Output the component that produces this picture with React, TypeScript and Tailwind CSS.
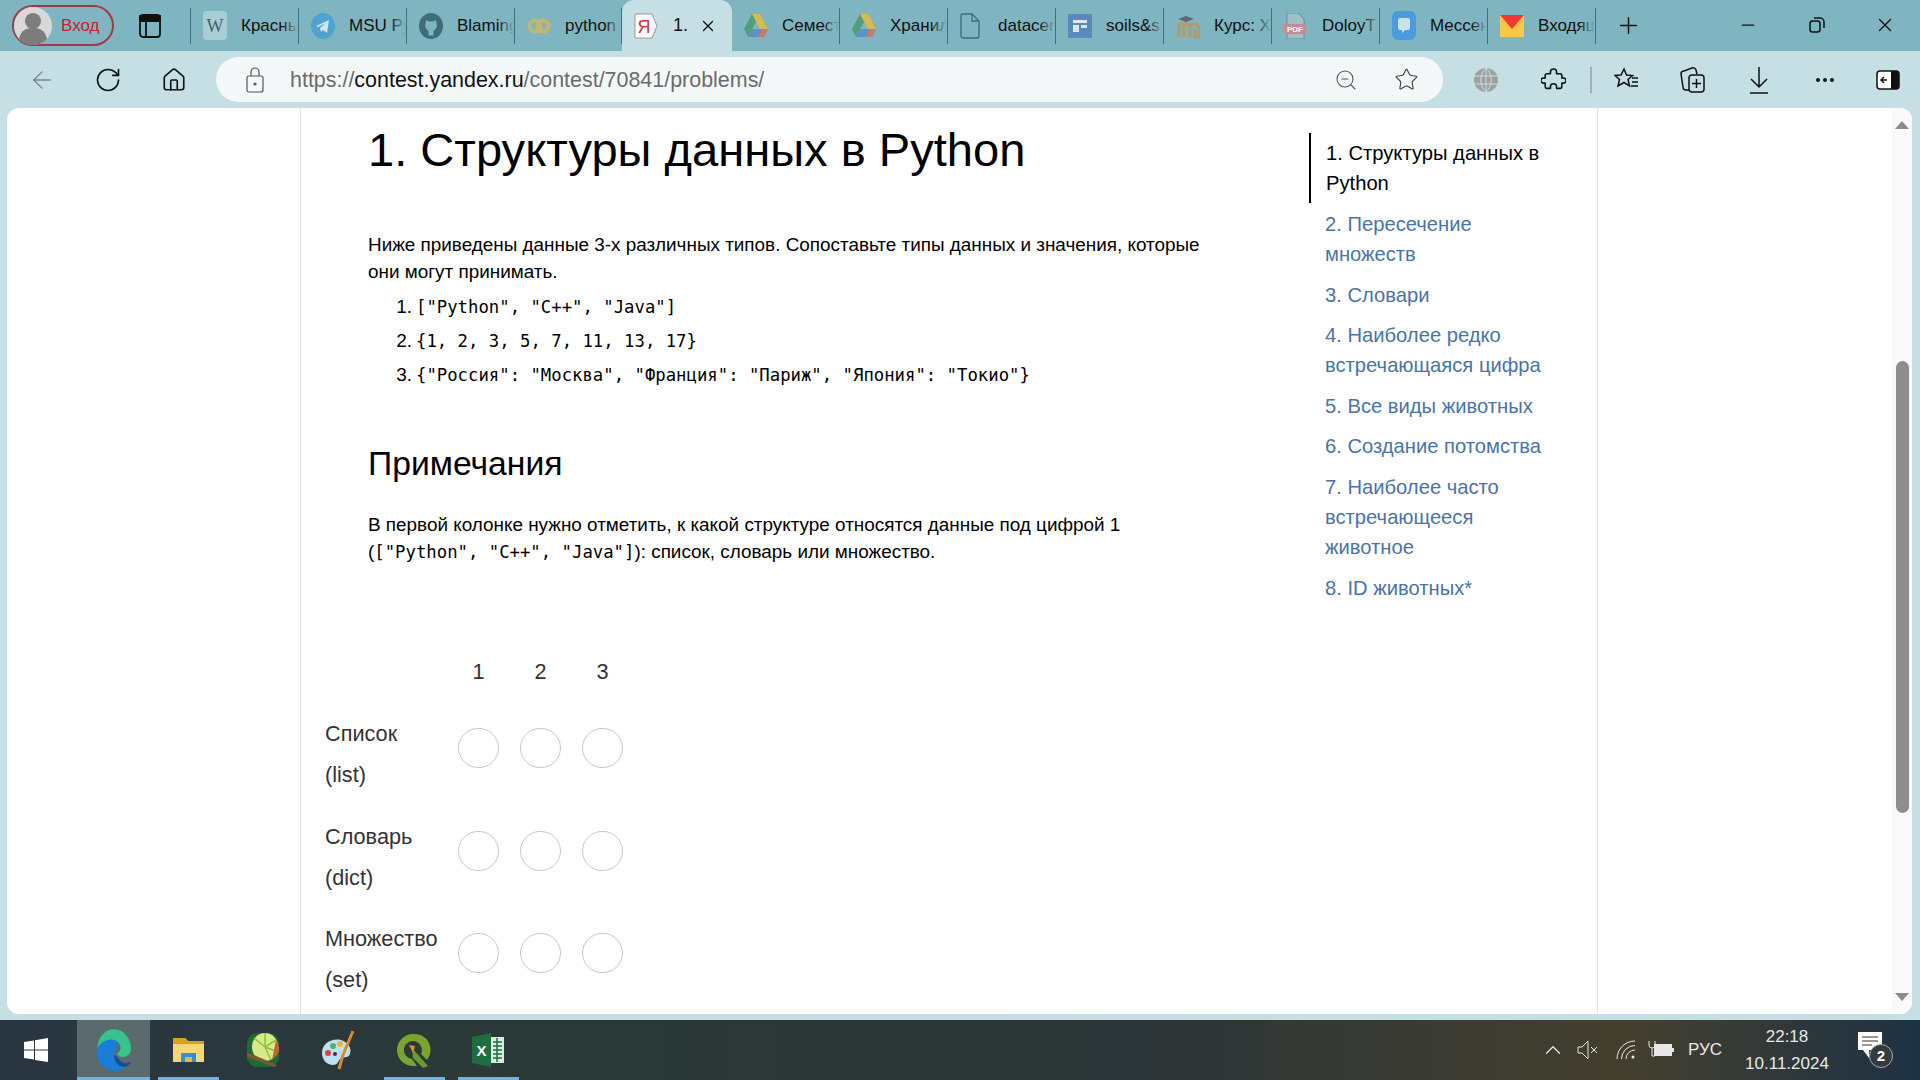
import React from "react";
import { ArrowLeft, RotateCw, Home, ZoomOut, Star, MoreHorizontal, Plus, Minus, X, ChevronUp } from "lucide-react";

const sans = "font-['Liberation_Sans',Arial,sans-serif]";

function Fav({ k }: { k: string }) {
  if (k === "w") return <svg width="24" height="29" viewBox="0 0 24 29"><rect width="24" height="29" rx="4" fill="#a9cdd4" /><text x="12" y="21" textAnchor="middle" fontFamily="Liberation Serif" fontSize="18" fill="#4b6066">W</text></svg>;
  if (k === "tg") return <svg width="24" height="26" viewBox="0 0 24 26"><ellipse cx="12" cy="13" rx="12" ry="13" fill="#4fa3cf" /><path d="M5 13l13-6-2 13-4-3-2 2-1-4 6-5-8 4z" fill="#cfe6ee" /></svg>;
  if (k === "gh") return <svg width="24" height="26" viewBox="0 0 24 26"><ellipse cx="12" cy="13" rx="12" ry="13" fill="#3f6c78" /><path d="M7 7l3 1.500h4L17 7l.5 4c1 3-1 6-3 6.500v5h-5v-5c-2-.5-4-3.500-3-6.500z" fill="#7fb5c0" /></svg>;
  if (k === "py") return <svg width="24" height="20" viewBox="0 0 24 20"><circle cx="8" cy="10" r="5.500" fill="none" stroke="#b8b87a" strokeWidth="4" /><circle cx="16" cy="10" r="5.500" fill="none" stroke="#c9b56a" strokeWidth="4" /></svg>;
  if (k === "drive") return <svg width="24" height="26" viewBox="0 0 24 26"><path d="M8 1h8l8 15h-8z" fill="#d9b84f" /><path d="M8 1L0 16l4 8 8-15z" fill="#4f9f78" /><path d="M4 24h16l4-8H8z" fill="#5b93c9" /><path d="M14 24h6l4-8h-6z" fill="#c97a68" /></svg>;
  if (k === "file") return <svg width="20" height="26" viewBox="0 0 20 26" fill="none" stroke="#3f6c78" strokeWidth="1.300"><path d="M1 3a2 2 0 0 1 2-2h9l7 7v15a2 2 0 0 1-2 2H3a2 2 0 0 1-2-2z" /><path d="M12 1v7h7" /></svg>;
  if (k === "soils") return <svg width="24" height="24" viewBox="0 0 24 24"><rect width="24" height="24" fill="#5c88bb" /><rect x="5" y="6" width="14" height="3" fill="#dbe6ef" /><rect x="5" y="11" width="6" height="7" fill="#dbe6ef" /><rect x="13" y="11" width="6" height="3" fill="#dbe6ef" /></svg>;
  if (k === "m") return <svg width="24" height="26" viewBox="0 0 24 26"><path d="M3 24V13c0-3 4-3 5 0 1-3 5-3 6 0v11M8 13v11M14 13c1-3 9-3 9 2v9h-4V16" fill="none" stroke="#b79a6a" strokeWidth="3" /><path d="M2 6l8-3 8 3-8 3z" fill="#667" /></svg>;
  if (k === "pdf") return <svg width="22" height="26" viewBox="0 0 22 26"><path d="M3 0h11l6 6v20H3z" fill="#9fc0c6" stroke="#6c8d94" /><rect y="11" width="22" height="10" rx="2" fill="#c98a92" /><text x="11" y="19" textAnchor="middle" fontFamily="Liberation Sans" fontWeight="700" fontSize="8" fill="#fff">PDF</text></svg>;
  if (k === "msg") return <svg width="24" height="29" viewBox="0 0 24 29"><rect width="24" height="29" rx="6" fill="#4b9be0" /><path d="M6 9a2 2 0 0 1 2-2h8a2 2 0 0 1 2 2v8a2 2 0 0 1-2 2h-3l-3 3v-3H8a2 2 0 0 1-2-2z" fill="#c9e2ee" /></svg>;
  if (k === "mail") return <svg width="24" height="26" viewBox="0 0 24 26"><rect y="2" width="24" height="22" fill="#f8c948" /><path d="M0 2h24L12 16z" fill="#f4372e" /></svg>;
  return null;
}

const leftTabs = [
  { k: "w", t: "Красны" },
  { k: "tg", t: "MSU Py" },
  { k: "gh", t: "Blaming" },
];
const rightTabs = [
  { k: "drive", t: "Семест" },
  { k: "drive", t: "Хранил" },
  { k: "file", t: "datacer" },
  { k: "soils", t: "soils&s" },
  { k: "m", t: "Курс: X" },
  { k: "pdf", t: "DoloyT" },
  { k: "msg", t: "Мессен" },
  { k: "mail", t: "Входящ" },
];

function Tab({ k, t, w = "w-[108px]" }: { k: string; t: string; w?: string }) {
  return (
    <div className={`${w} h-[36px] shrink-0 flex items-center border-r border-[#3f6f7a] relative`}>
      <div className="w-[50px] pl-[12px] shrink-0 flex items-center"><Fav k={k} /></div>
      <div className="w-[57px] overflow-hidden whitespace-nowrap text-[17px] text-[#111] relative">
        {t}
        <div className="absolute right-0 top-0 bottom-0 w-[16px] bg-gradient-to-r from-transparent to-[#7fb5c0]" />
      </div>
    </div>
  );
}

function TabBar() {
  return (
    <div className={`h-[51px] shrink-0 bg-[#7fb5c0] flex items-center ${sans}`}>
      <div className="ml-[12px] w-[102px] h-[41px] shrink-0 rounded-full border-2 border-[#a23a45] flex items-center">
        <svg width="38" height="38" viewBox="0 0 38 38" className="shrink-0">
          <circle cx="19" cy="19" r="19" fill="#d8d8d8" />
          <circle cx="19" cy="14" r="8" fill="#7d7d7d" />
          <path d="M5 32c2-9 7-11 14-11s12 2 14 11a19 19 0 0 1-28 0z" fill="#7d7d7d" />
        </svg>
        <span className="ml-[9px] text-[17px] text-[#c8202c]">Вход</span>
      </div>
      <div className="w-[76px] flex justify-center shrink-0 pr-[5px]">
        <svg width="22" height="24" viewBox="0 0 22 24" fill="none" stroke="#111" strokeWidth="1.800">
          <rect x="1" y="1" width="20" height="22" rx="3" />
          <path d="M1 2h20v5H1z" fill="#111" />
          <path d="M7 7v16" />
        </svg>
      </div>
      <div className="h-[36px] border-l border-[#3f6f7a] shrink-0" />
      {leftTabs.map((x) => <Tab key={x.t} k={x.k} t={x.t} />)}
      <Tab k="py" t="python" w="w-[107px]" />
      <div className="w-[110px] h-[51px] shrink-0 bg-[#c6dfe4] rounded-t-[12px] flex items-center">
        <div className="w-[51px] pl-[12px] shrink-0">
          <svg width="24" height="28" viewBox="0 0 24 28"><path d="M1 2h17l5 12-5 12H1z" fill="#fff" stroke="#999" /><text x="10" y="21" textAnchor="middle" fontFamily="Liberation Sans" fontSize="18" fill="#d33">Я</text></svg>
        </div>
        <span className="text-[18px] text-[#111]">1.</span>
        <X size={18} strokeWidth={1.800} className="ml-[11px] text-[#111]" />
      </div>
      {rightTabs.map((x) => <Tab key={x.t} k={x.k} t={x.t} />)}
      <Plus size={27} strokeWidth={1.300} className="ml-[19px] text-[#111] shrink-0" />
      <div className="flex-1" />
      <div className="flex items-center shrink-0 gap-[49px] pr-[24px] pb-[2px]">
        <Minus size={20} strokeWidth={1.500} className="text-[#111] mr-[2px]" />
        <svg width="16" height="18" viewBox="0 0 16 18" fill="none" stroke="#111" strokeWidth="1.500"><rect x="1" y="5" width="10" height="11" rx="2.500" /><path d="M5 2h6a4 4 0 0 1 4 4v6" /></svg>
        <X size={22} strokeWidth={1.500} className="text-[#111]" />
      </div>
    </div>
  );
}

function Toolbar() {
  return (
    <div className={`h-[57px] shrink-0 bg-[#c6dfe4] flex items-start pt-[6px] ${sans}`}>
      <div className="w-[216px] h-[45px] shrink-0 flex items-center text-[#111]">
        <ArrowLeft size={28} strokeWidth={1.100} className="ml-[28px] text-[#75878c]" />
        <RotateCw size={28} strokeWidth={1.400} className="ml-[38px]" />
        <Home size={26} strokeWidth={1.500} className="ml-[39px]" />
      </div>
      <div className="w-[1227px] h-[45px] shrink-0 bg-[#f5f8f9] rounded-full flex items-center">
        <svg width="18" height="26" viewBox="0 0 18 26" fill="none" stroke="#555" strokeWidth="1.200" className="ml-[30px]"><rect x="1" y="9" width="16" height="16" rx="2" /><path d="M5 9V5a4 4 0 0 1 8 0v4" /><circle cx="9" cy="17" r="1" fill="#555" /></svg>
        <span className="ml-[26px] pt-[2px] text-[21.450px] text-[#6b6b6b] whitespace-nowrap">https://<span className="text-[#111]">contest.yandex.ru</span>/contest/70841/problems/</span>
        <div className="flex-1" />
        <ZoomOut size={24} strokeWidth={1.100} className="text-[#555] mr-[36px]" />
        <Star size={25} strokeWidth={1.100} className="text-[#444] mr-[24px]" />
      </div>
      <div className="flex-1 h-[45px] flex items-center text-[#111]">
        <svg width="24" height="24" viewBox="0 0 24 24" fill="none" className="ml-[31px]"><circle cx="12" cy="12" r="12" fill="#a0a0a0" /><path d="M0 8h24M0 16h24M12 0v24M12 0c-7 6-7 18 0 24M12 0c7 6 7 18 0 24" stroke="#c6dfe4" strokeWidth="1" /></svg>
        <svg width="25" height="25" viewBox="0 0 24 24" fill="none" stroke="#111" strokeWidth="1.500" strokeLinejoin="round" className="ml-[43px]"><path d="M9 5a3 3 0 0 1 6 0c0 1-.5 1 0 1.500h3.500a1.500 1.500 0 0 1 1.500 1.500v2.500c.5.5 1 0 1.500 0a2.500 2.500 0 0 1 0 5c-.5 0-1-.5-1.500 0V19a1.500 1.500 0 0 1-1.500 1.500H15c-.5-.5 0-1 0-1.500a3 3 0 0 0-6 0c0 .5.5 1 0 1.500H5.500A1.500 1.500 0 0 1 4 19v-3.500c-.5-.5-1 0-1.500 0a2.500 2.500 0 0 1 0-5c.5 0 1 .5 1.500 0V8a1.500 1.500 0 0 1 1.500-1.500H9c.5-.5 0-.5 0-1.500z" /></svg>
        <div className="ml-[24px] h-[26px] border-l-2 border-[#9db3b8]" />
        <svg width="26" height="26" viewBox="0 0 26 26" fill="none" stroke="#111" strokeWidth="1.500" className="ml-[22px]"><path d="M10 2l2.500 6 6 .5-4.500 4 1.500 6.500-5.500-3.500L4 19l1.500-6.500L1 8.500l6-.5z" /><path d="M18 11h6M18 15h6M17 19h7" /></svg>
        <svg width="26" height="28" viewBox="0 0 26 28" fill="none" stroke="#111" strokeWidth="1.500" className="ml-[40px]"><path d="M9 24H6a3 3 0 0 1-3-3l-2-13a3 3 0 0 1 3-3l8-3a3 3 0 0 1 4 2l1 4" /><rect x="9" y="9" width="15" height="17" rx="3" /><path d="M16.500 13v9M12 17.500h9" /></svg>
        <svg width="24" height="28" viewBox="0 0 24 28" fill="none" stroke="#111" strokeWidth="1.500" className="ml-[41px]"><path d="M12 1v20M4 13l8 8 8-8M3 27h18" /></svg>
        <MoreHorizontal size={24} strokeWidth={2} className="ml-[42px]" />
        <svg width="24" height="20" viewBox="0 0 24 20" className="ml-[39px]"><rect x="1" y="1" width="22" height="18" rx="3" fill="#fff" stroke="#111" strokeWidth="1.500" /><path d="M15 1h5a3 3 0 0 1 3 3v12a3 3 0 0 1-3 3h-5z" fill="#111" /><path d="M11 10H5M8 7l-3 3 3 3" fill="none" stroke="#111" strokeWidth="1.500" /></svg>
      </div>
    </div>
  );
}

const navItems = [
  ["2. Пересечение", "множеств"],
  ["3. Словари"],
  ["4. Наиболее редко", "встречающаяся цифра"],
  ["5. Все виды животных"],
  ["6. Создание потомства"],
  ["7. Наиболее часто", "встречающееся", "животное"],
  ["8. ID животных*"],
];

function Nav() {
  return (
    <div className="w-[288px] shrink-0 pt-[25px] text-[20.200px] leading-[30px] text-[#4a72ad]">
      <div className="border-l-2 border-black pl-[15px] pt-[5px] text-black h-[70px]">
        <div>1. Структуры данных в</div>
        <div>Python</div>
      </div>
      <div className="pl-[16px] -mt-[4.500px]">
        {navItems.map((lines) => (
          <div key={lines[0]} className="pt-[10.600px]">
            {lines.map((l) => <div key={l}>{l}</div>)}
          </div>
        ))}
      </div>
    </div>
  );
}

function Circles() {
  return (
    <>
      <div className="w-[41px] h-[40px] rounded-full border border-[#c8c8c8]" />
      <div className="w-[41px] h-[40px] rounded-full border border-[#c8c8c8]" />
      <div className="w-[41px] h-[40px] rounded-full border border-[#c8c8c8]" />
    </>
  );
}

function Row({ a, b }: { a: string; b: string }) {
  return (
    <div className="flex h-[102.500px] items-start">
      <div className="w-[133px] text-[21.700px] leading-[41px] text-[#333] shrink-0">
        <div>{a}</div>
        <div>{b}</div>
      </div>
      <div className="flex gap-[21px] pt-[15px]">
        <Circles />
      </div>
    </div>
  );
}

function Form() {
  return (
    <div className="-ml-[43px] mt-[93px]">
      <div className="ml-[133px] flex gap-[21px] text-[21.700px] text-[#333] h-[54px] leading-[25px]">
        <div className="w-[41px] text-center">1</div>
        <div className="w-[41px] text-center">2</div>
        <div className="w-[41px] text-center">3</div>
      </div>
      <Row a="Список" b="(list)" />
      <Row a="Словарь" b="(dict)" />
      <Row a="Множество" b="(set)" />
    </div>
  );
}

function Content() {
  const mono = "font-['DejaVu_Sans_Mono',monospace] text-[17.300px]";
  return (
    <div className="flex-1 min-w-0 pl-[67px] text-black">
      <h1 className="text-[47.100px] leading-[56px] mt-[14px] font-normal text-black">1. Структуры данных в Python</h1>
      <p className="mt-[53px] text-[18.900px] leading-[27px] w-[850px]">Ниже приведены данные 3-х различных типов. Сопоставьте типы данных и значения, которые они могут принимать.</p>
      <div className="mt-[5px] text-[19px] leading-[34px]">
        <div className="flex"><span className="w-[44px] text-right">1.</span><span className={`ml-[4px] ${mono}`}>["Python", "C++", "Java"]</span></div>
        <div className="flex"><span className="w-[44px] text-right">2.</span><span className={`ml-[4px] ${mono}`}>{"{1, 2, 3, 5, 7, 11, 13, 17}"}</span></div>
        <div className="flex"><span className="w-[44px] text-right">3.</span><span className={`ml-[4px] ${mono}`}>{'{"Россия": "Москва", "Франция": "Париж", "Япония": "Токио"}'}</span></div>
      </div>
      <h2 className="mt-[49px] text-[33.700px] leading-[44px] font-normal">Примечания</h2>
      <p className="mt-[26px] text-[18.900px] leading-[27px] w-[850px]">
        В первой колонке нужно отметить, к какой структуре относятся данные под цифрой 1<br />
        (<span className={mono}>["Python", "C++", "Java"]</span>): список, словарь или множество.
      </p>
      <Form />
    </div>
  );
}

function Scrollbar() {
  return (
    <div className="w-[20px] h-full shrink-0 bg-[#fafafa] flex flex-col items-center pt-[13px] pb-[13px]">
      <div className="w-0 h-0 border-l-[7px] border-r-[7px] border-b-[8px] border-l-transparent border-r-transparent border-b-[#8a8a8a]" />
      <div className="w-[13px] h-[452px] mt-[232px] rounded-full bg-[#8e8e8e]" />
      <div className="flex-1" />
      <div className="w-0 h-0 border-l-[7px] border-r-[7px] border-t-[8px] border-l-transparent border-r-transparent border-t-[#8a8a8a]" />
    </div>
  );
}

function Main() {
  return (
    <div className="flex-1 min-h-0 bg-[#c6dfe4] pl-[7px] pr-[8px] pb-[6px]">
      <div className={`h-full bg-white rounded-[12px] overflow-hidden flex ${sans}`}>
        <div className="w-[293px] shrink-0" />
        <div className="w-[1298px] shrink-0 border-l border-r border-[#e3e3e3] flex">
          <Content />
          <Nav />
        </div>
        <div className="flex-1" />
        <Scrollbar />
      </div>
    </div>
  );
}

function TBIcon({ k }: { k: string }) {
  if (k === "edge") return (
    <svg width="38" height="44" viewBox="0 0 38 38" preserveAspectRatio="none">
      <path d="M3 18C4 7 12 1 20 1c10 0 17 8 17 17 0 4-3 7-8 7-3 0-5-1-6-3 3-1 4-4 3-7-2-4-7-6-12-4-5 2-9 5-11 7z" fill="#35c48d" />
      <path d="M3 18c3-5 8-8 14-8 5 0 8 3 7 7-2 1-4 3-4 6 0 7 6 12 13 10-4 3-8 4-13 4C10 37 1 29 3 18z" fill="#1b7ed6" />
      <path d="M20 23c0 7 6 12 13 10 2-1 3-2 4-4-3 2-7 2-10 0-2-2-4-4-7-6z" fill="#114f9c" />
    </svg>
  );
  if (k === "folder") return (
    <svg width="33" height="28" viewBox="0 0 33 28">
      <path d="M1 2h12l3 3h16v21H1z" fill="#f7d774" />
      <path d="M1 2h12l3 3H1z" fill="#d8a21f" />
      <rect x="1" y="5" width="31" height="3" fill="#d8a21f" />
      <path d="M9 26v-9h15v9h-4v-5h-7v5z" fill="#2f8fd8" />
      <rect x="13" y="21" width="7" height="5" fill="#e9b84a" />
    </svg>
  );
  if (k === "lime") return (
    <svg width="34" height="36" viewBox="0 0 34 36">
      <rect x="1" y="1" width="32" height="34" rx="10" fill="#1d6a35" />
      <ellipse cx="19" cy="15" rx="13" ry="14" fill="#d9e88a" />
      <path d="M19 15L8 6M19 15V1M19 15l11-7M19 15l13 5M19 15l6 13" stroke="#8fbf3f" strokeWidth="1.500" />
      <path d="M30 8a14 14 0 0 1 2 14l-6 6z" fill="#c9603a" />
      <path d="M1 20l30 13-3 2L1 25z" fill="#7a5a32" />
    </svg>
  );
  if (k === "paint") return (
    <svg width="36" height="42" viewBox="0 0 36 42">
      <path d="M2 24C2 14 12 9 21 11c7 2 11 8 9 14-2 5-7 2-10 5-2 3-3 6-7 6-6 0-11-5-11-12z" fill="#bfe0f0" />
      <circle cx="8" cy="24" r="3" fill="#d9433f" />
      <circle cx="13" cy="17" r="3" fill="#4eb36b" />
      <circle cx="20" cy="15" r="3" fill="#eab53a" />
      <circle cx="15" cy="25" r="2" fill="#334" />
      <path d="M33 2l-10 24-4 14" stroke="#d98a2f" strokeWidth="3" fill="none" />
    </svg>
  );
  if (k === "qgis") return (
    <svg width="36" height="36" viewBox="0 0 36 36">
      <path d="M18 2a16 16 0 1 0 0 32h4l-5-7a9 9 0 1 1 9-5l6 6A16 16 0 0 0 18 2z" fill="#7ba42d" />
      <path d="M17 16l8 9 8 9-5 2-10-10z" fill="#6a9a30" />
      <path d="M14 13l6 1-2 7z" fill="#ee8a1e" />
    </svg>
  );
  return (
    <svg width="32" height="34" viewBox="0 0 32 34">
      <path d="M0 4l19-4v34L0 30z" fill="#1d6f42" />
      <rect x="19" y="4" width="13" height="26" fill="#d7ece0" />
      <path d="M21 9h9M21 13h9M21 17h9M21 21h9M21 25h9M25 5v24" stroke="#1d6f42" strokeWidth="1.500" />
      <text x="9.500" y="23" textAnchor="middle" fontFamily="Liberation Sans" fontWeight="700" fontSize="15" fill="#fff">X</text>
    </svg>
  );
}

function TB({ k, w, active, on, cls }: { k: string; w: string; active?: boolean; on?: string; cls?: string }) {
  return (
    <div className={`${w} h-[60px] shrink-0 relative flex items-center justify-center ${active ? "bg-[#5b6a6c] pr-[2px]" : ""} ${cls ?? ""}`}>
      <TBIcon k={k} />
      {on ? <div className={`absolute bottom-0 h-[3px] bg-[#6fb2e6] ${on}`} /> : null}
    </div>
  );
}

function Taskbar() {
  return (
    <div className={`h-[60px] shrink-0 flex items-center bg-[linear-gradient(90deg,#2a3642_0%,#2b3a36_30%,#2c3537_60%,#433f2e_85%,#1e3244_100%)] text-[#e8e8e8] ${sans}`}>
      <div className="w-[77px] shrink-0 flex justify-center pr-[5px]">
        <svg width="24" height="24" viewBox="0 0 24 24" fill="#fff"><path d="M0 4l10-1.500v9H0zM11 2.300L24 0v11.500H11zM0 12.500h10v9L0 20zM11 12.500h13V24l-13-2z" /></svg>
      </div>
      <TB k="edge" w="w-[73px]" active on="left-0 right-0" />
      <TB k="folder" w="w-[76px]" on="left-[8px] w-[61px]" />
      <TB k="lime" w="w-[74px]" />
      <TB k="paint" w="w-[75px]" />
      <TB k="qgis" w="w-[75px]" on="left-[9px] w-[61px]" />
      <TB k="excel" w="w-[75px]" on="left-[8px] w-[61px]" />
      <div className="flex-1" />
      <ChevronUp size={26} strokeWidth={1.100} className="shrink-0" />
      <svg width="24" height="24" viewBox="0 0 24 24" fill="none" stroke="#e8e8e8" strokeWidth="1" className="ml-[10px] shrink-0"><path d="M2 9h4l6-6v18l-6-6H2zM15 9l6 6M21 9l-6 6" /></svg>
      <svg width="22" height="22" viewBox="0 0 22 22" fill="none" stroke="#e8e8e8" strokeWidth="1" className="ml-[15px] shrink-0"><path d="M2 20A18 18 0 0 1 20 2M6.500 20A13.500 13.500 0 0 1 20 6.500M11 20a9 9 0 0 1 9-9" /><circle cx="18" cy="18" r="1.500" fill="#e8e8e8" stroke="none" /></svg>
      <svg width="26" height="20" viewBox="0 0 26 20" className="ml-[11px] shrink-0"><path d="M1 1v4a3 3 0 0 0 6 0V1M4 8v8h3" fill="none" stroke="#e8e8e8" /><rect x="6" y="4" width="18" height="12" fill="#e8e8e8" /><rect x="24" y="8" width="2" height="4" fill="#e8e8e8" /></svg>
      <span className="ml-[14px] text-[17px] w-[36px] shrink-0">РУС</span>
      <div className="ml-[15px] w-[96px] text-center text-[17px] leading-[27px] shrink-0">
        <div>22:18</div>
        <div>10.11.2024</div>
      </div>
      <div className="ml-[23px] mr-[26px] w-[36px] h-[40px] shrink-0 relative">
        <svg width="24" height="26" viewBox="0 0 24 26" className="absolute left-[0px] top-[2px]"><path d="M0 0h24v18H12l-1 0-0 8-6-8H0z" fill="#fff" /><path d="M4 5h16M4 9h16M4 13h10" stroke="#333" /></svg>
        <div className="absolute left-[11px] top-[14px] w-[24px] h-[24px] rounded-full bg-[#333b3f] border border-[#aaa] text-[15px] font-bold text-white flex items-center justify-center">2</div>
      </div>
    </div>
  );
}

export default function App() {
  return (
    <div className="w-[1920px] h-[1080px] overflow-hidden flex flex-col">
      <TabBar />
      <Toolbar />
      <Main />
      <Taskbar />
    </div>
  );
}
